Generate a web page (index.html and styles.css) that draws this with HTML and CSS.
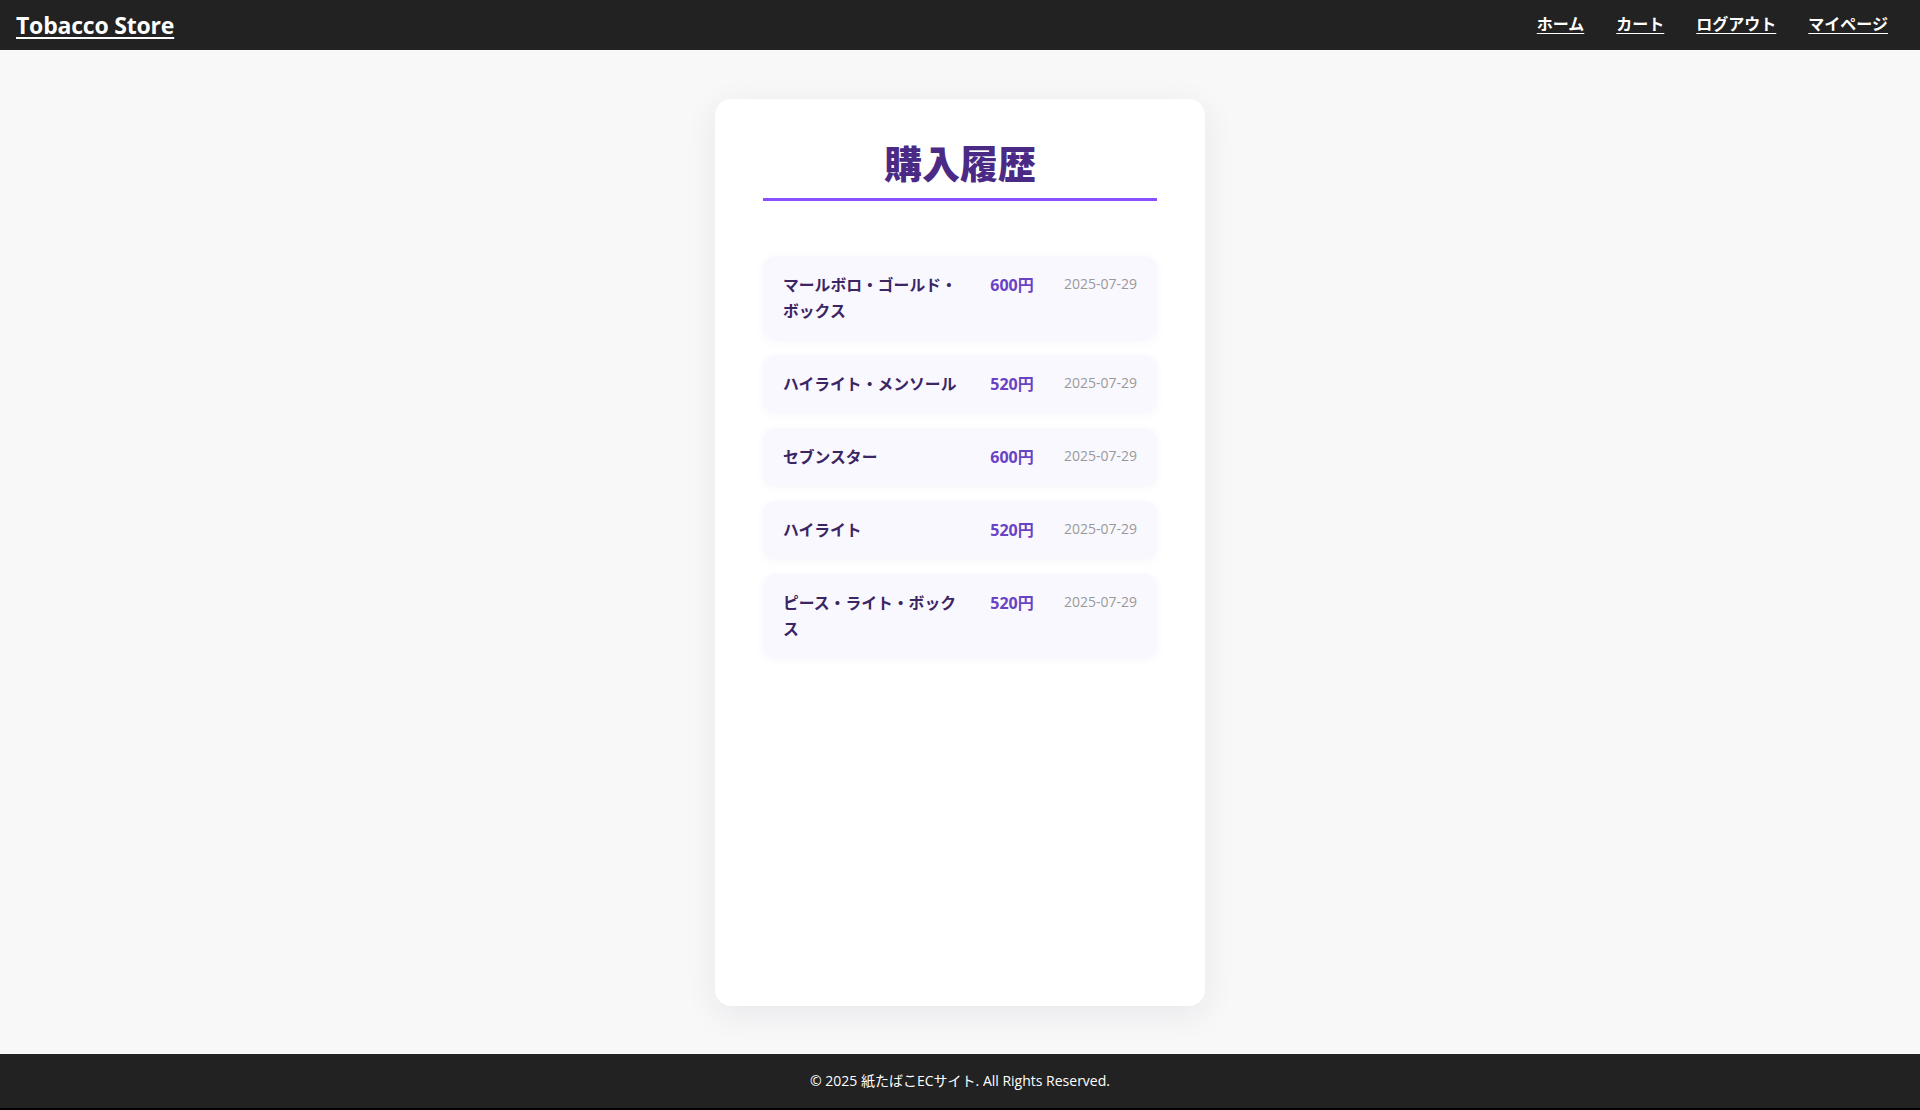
FILE: index.html
```
<!DOCTYPE html>
<html lang="ja">
<head>
<meta charset="utf-8">
<title>購入履歴 - Tobacco Store</title>
<link rel="stylesheet" href="styles.css">
</head>
<body>
<header class="site-header">
  <a class="logo" href="#">Tobacco Store</a>
  <nav class="nav">
    <a href="#">ホーム</a>
    <a href="#">カート</a>
    <a href="#">ログアウト</a>
    <a href="#">マイページ</a>
  </nav>
</header>
<main class="main">
  <section class="card">
    <h1 class="title">購入履歴</h1>
    <ul class="history">
      <li class="item"><span class="name">マールボロ・ゴールド・ボックス</span><span class="price">600円</span><span class="date">2025-07-29</span></li>
      <li class="item"><span class="name">ハイライト・メンソール</span><span class="price">520円</span><span class="date">2025-07-29</span></li>
      <li class="item"><span class="name">セブンスター</span><span class="price">600円</span><span class="date">2025-07-29</span></li>
      <li class="item"><span class="name">ハイライト</span><span class="price">520円</span><span class="date">2025-07-29</span></li>
      <li class="item"><span class="name">ピース・ライト・ボックス</span><span class="price">520円</span><span class="date">2025-07-29</span></li>
    </ul>
  </section>
</main>
<footer class="site-footer">© 2025 紙たばこECサイト. All Rights Reserved.</footer>
</body>
</html>
```
FILE: styles.css
```
* { box-sizing: border-box; }
html, body { margin: 0; padding: 0; }
body {
  min-height: 100vh;
  display: flex;
  flex-direction: column;
  background: #f8f8f8;
  font-family: "Open Sans", "Noto Sans CJK JP", sans-serif;
  color: #333;
}
.site-header {
  height: 50px;
  background: #222;
  display: flex;
  align-items: center;
  justify-content: space-between;
  padding: 0 32px 0 16px;
}
.logo {
  color: #fff;
  font-size: 23px;
  font-weight: 700;
  text-decoration: underline;
  text-underline-offset: 3px;
  text-decoration-thickness: 2px;
  letter-spacing: -0.2px;
}
.nav { display: flex; gap: 32px; margin-bottom: 5px; }
.nav a {
  color: #fff;
  font-family: "Noto Sans CJK JP", sans-serif;
  font-size: 16px;
  font-weight: 700;
  text-decoration: underline;
  text-underline-offset: 3px;
}
.main {
  flex: 1;
  display: flex;
  justify-content: center;
  padding: 49px 0 48px;
}
.card {
  width: 490px;
  background: #fff;
  border-radius: 16px;
  box-shadow: 0 8px 32px rgba(40, 30, 80, 0.08);
  padding: 40px 48px;
}
.title {
  margin: 0;
  text-align: center;
  font-size: 38px;
  line-height: 46px;
  font-weight: 900;
  color: #4b2a86;
  padding-bottom: 13px;
  border-bottom: 3px solid #8a50ff;
  font-family: "Noto Sans CJK JP", sans-serif;
}
.history {
  list-style: none;
  margin: 55px 0 0;
  padding: 0;
  display: flex;
  flex-direction: column;
  gap: 15px;
}
.item {
  display: grid;
  grid-template-columns: 177px auto auto;
  justify-content: space-between;
  align-items: start;
  background: #f9f8ff;
  border-radius: 12px;
  box-shadow: 0 2px 8px rgba(100, 80, 180, 0.05);
  padding: 16px 20px;
  line-height: 26px;
}
.name {
  font-family: "Noto Sans CJK JP", sans-serif;
  font-size: 15.8px;
  font-weight: 700;
  color: #3b2563;
}
.price {
  font-size: 16px;
  font-weight: 700;
  color: #6a42c4;
}
.date {
  font-size: 14px;
  color: #999;
  line-height: 24px;
}
.site-footer {
  height: 56px;
  background: #222;
  color: #fff;
  font-size: 14px;
  text-align: center;
  padding-top: 16px;
  border-bottom: 2px solid #000;
}
```
